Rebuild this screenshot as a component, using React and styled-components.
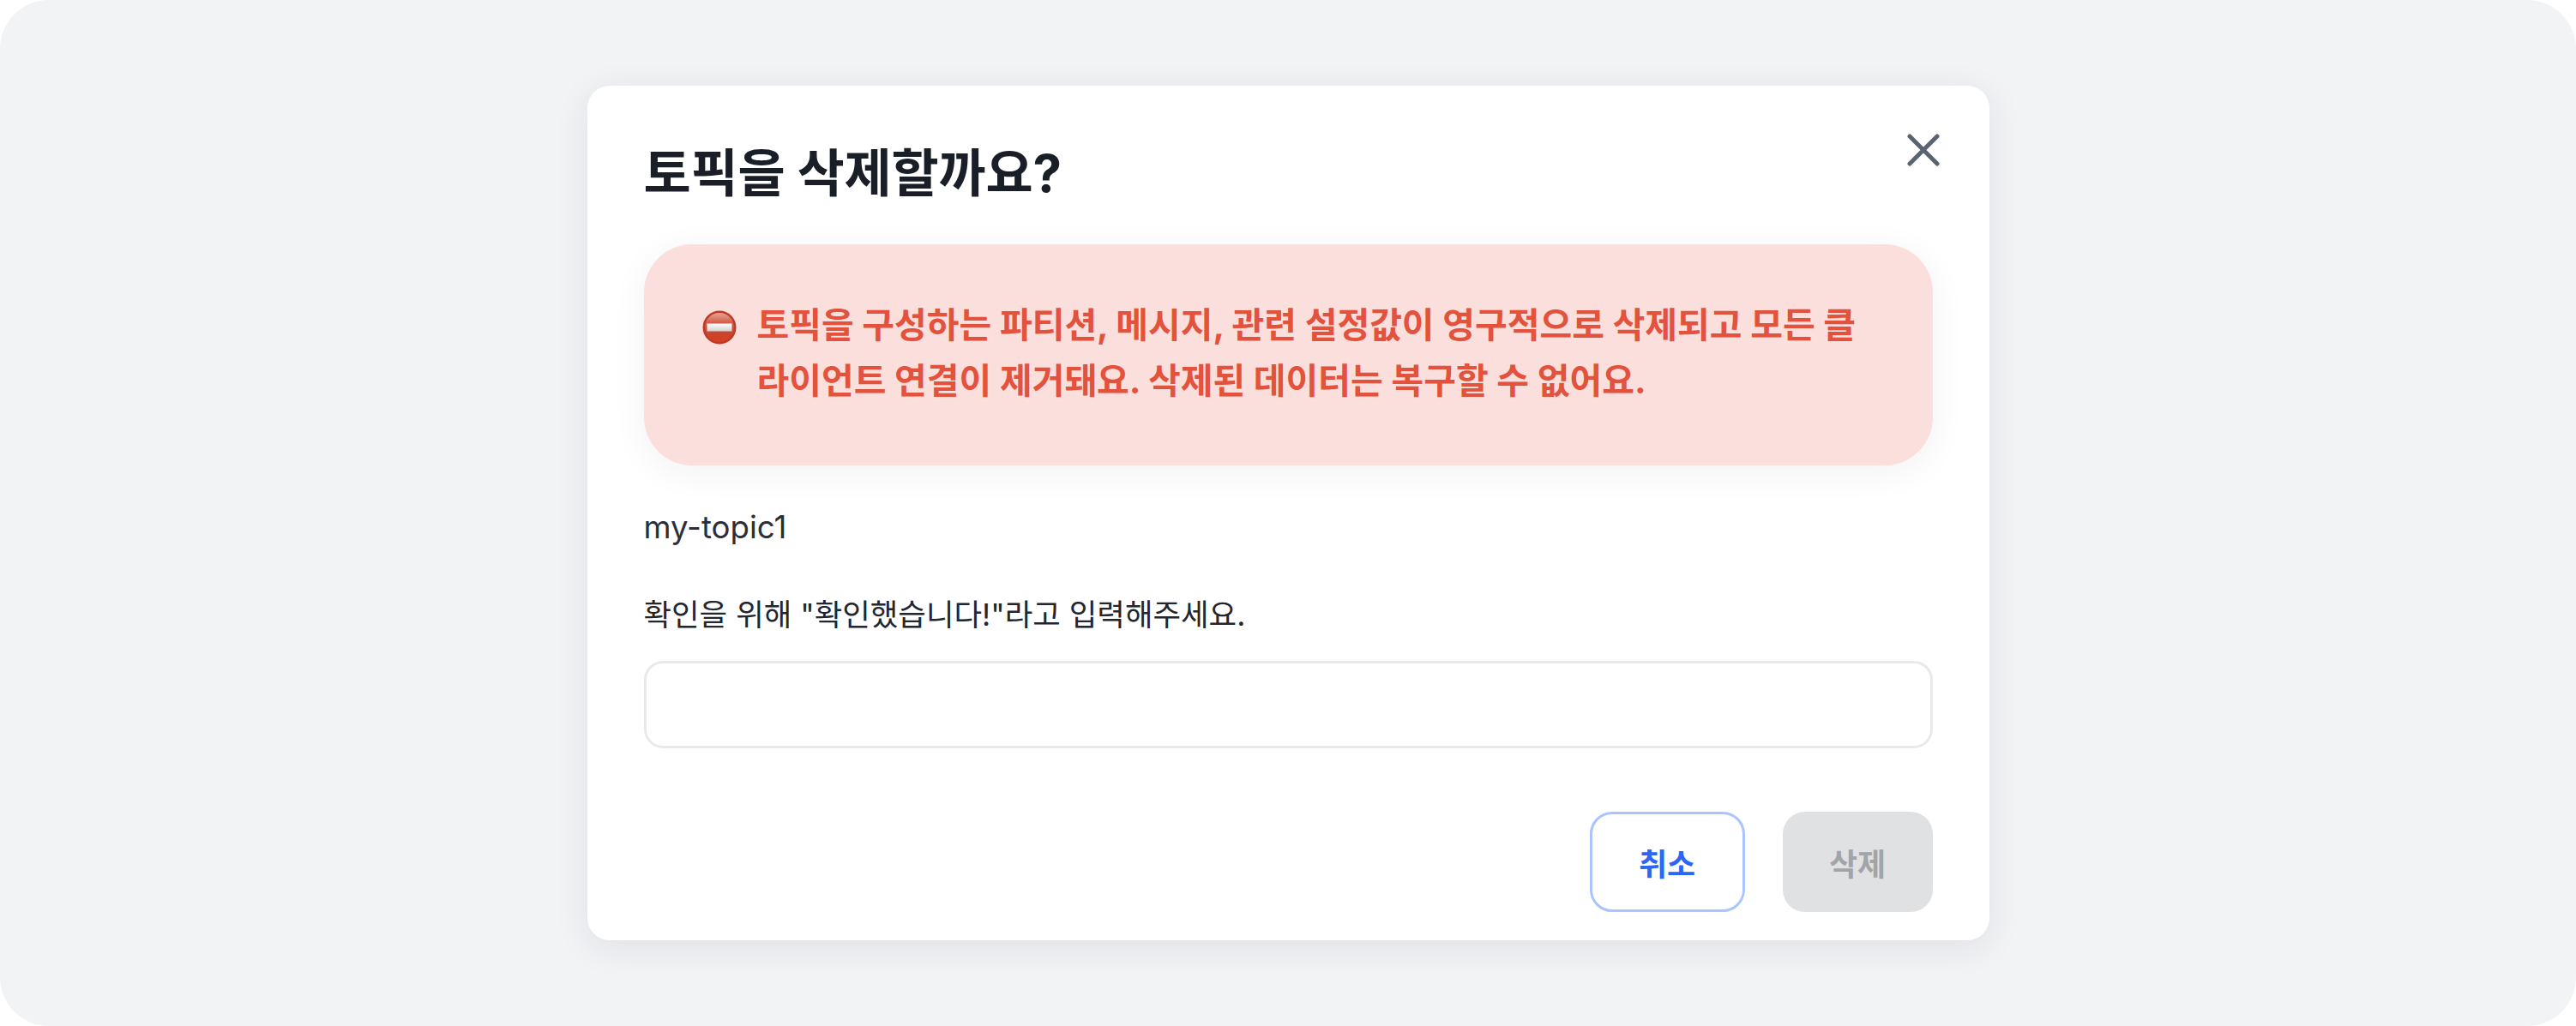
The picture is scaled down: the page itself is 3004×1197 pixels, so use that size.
import React from 'react';
import styled, { createGlobalStyle } from 'styled-components';

const Global = createGlobalStyle`
  html, body { margin: 0; padding: 0; background: #ffffff; }
  * { box-sizing: border-box; }
`;
const fontStack = `Inter, "Noto Sans CJK KR", sans-serif`;

const Frame = styled.div`
  width: 3004px;
  height: 1197px;
  background: #f2f3f5;
  border-radius: 57px;
  display: flex;
  align-items: center;
  justify-content: center;
  font-family: ${fontStack};
`;
const Card = styled.section`
  position: relative;
  width: 1635px;
  height: 997px;
  padding: 68px 66px 33px 66px;
  background: #ffffff;
  border-radius: 26px;
  box-shadow: 0 8px 40px rgba(30, 35, 50, 0.09);
  display: flex;
  flex-direction: column;
`;
const Title = styled.h2`
  margin: 0;
  height: 68px;
  font-size: 60px;
  line-height: 68px;
  font-weight: 700;
  letter-spacing: -0.2px;
  color: #1a1e27;
`;
const Close = styled.button`
  position: absolute;
  top: 52px;
  right: 54px;
  width: 46px;
  height: 46px;
  padding: 0;
  border: 0;
  background: none;
  display: flex;
  align-items: center;
  justify-content: center;
`;
const Alert = styled.div`
  margin-top: 49px;
  height: 258px;
  padding: 62px 60px 0 68px;
  background: #fbdfdc;
  border-radius: 56px;
  box-shadow: 0 8px 40px rgba(30, 35, 50, 0.06);
  display: flex;
  gap: 24px;
`;
const AlertIcon = styled.svg`
  flex: none;
  width: 40px;
  height: 40px;
  margin-top: 15px;
`;
const AlertText = styled.p`
  margin: 0;
  flex: 1;
  font-size: 41px;
  line-height: 65px;
  font-weight: 700;
  color: #e2523c;
  word-break: break-all;
`;
const Topic = styled.p`
  margin: 47px 0 0;
  height: 50px;
  font-size: 36.6px;
  line-height: 50px;
  font-weight: 400;
  color: #2b2f38;
`;
const Hint = styled.label`
  display: block;
  margin-top: 53px;
  height: 50px;
  font-size: 35.4px;
  line-height: 50px;
  font-weight: 400;
  color: #22262f;
`;
const Input = styled.input`
  display: block;
  margin-top: 28px;
  width: 100%;
  height: 102px;
  border: 3px solid #e8e9ec;
  border-radius: 22px;
  background: #ffffff;
  outline: none;
`;
const Actions = styled.div`
  margin-top: auto;
  display: flex;
  justify-content: flex-end;
  gap: 44px;
`;
const Button = styled.button`
  width: ${p => (p.$primary ? '175px' : '181px')};
  height: 117px;
  padding: 0;
  border-radius: 26px;
  font-family: ${fontStack};
  font-size: 36px;
  font-weight: 700;
  border: ${p => (p.$primary ? '0' : '3px solid #a9c4ff')};
  background: ${p => (p.$primary ? '#e0e1e3' : '#ffffff')};
  color: ${p => (p.$primary ? '#a3a4a8' : '#2c66f6')};
`;

export default function App() {
  return (
    <>
      <Global />
      <Frame>
        <Card>
          <Title>토픽을 삭제할까요?</Title>
          <Close aria-label="닫기">
            <svg width="38" height="38" viewBox="0 0 38 38" fill="none" stroke="#5c6370" strokeWidth="5" strokeLinecap="round">
              <path d="M3 3 L35 35 M35 3 L3 35" />
            </svg>
          </Close>
          <Alert>
            <AlertIcon viewBox="0 0 40 40">
              <defs>
                <linearGradient id="noEntry" x1="0" y1="0" x2="0" y2="1">
                  <stop offset="0" stopColor="#e8a496" />
                  <stop offset="0.35" stopColor="#d25a46" />
                  <stop offset="0.7" stopColor="#c8452e" />
                  <stop offset="1" stopColor="#d9401f" />
                </linearGradient>
                <linearGradient id="noBar" x1="0" y1="0" x2="0" y2="1">
                  <stop offset="0" stopColor="#ffffff" />
                  <stop offset="1" stopColor="#cfcfcf" />
                </linearGradient>
              </defs>
              <circle cx="20" cy="20" r="19.5" fill="#bf3a26" />
              <circle cx="20" cy="20" r="17" fill="url(#noEntry)" />
              <rect x="5.5" y="15.5" width="29" height="9" fill="url(#noBar)" />
            </AlertIcon>
            <AlertText>토픽을 구성하는 파티션, 메시지, 관련 설정값이 영구적으로 삭제되고 모든 클라이언트 연결이 제거돼요. 삭제된 데이터는 복구할 수 없어요.</AlertText>
          </Alert>
          <Topic>my-topic1</Topic>
          <Hint htmlFor="confirm">확인을 위해 "확인했습니다!"라고 입력해주세요.</Hint>
          <Input id="confirm" />
          <Actions>
            <Button>취소</Button>
            <Button $primary>삭제</Button>
          </Actions>
        </Card>
      </Frame>
    </>
  );
}
